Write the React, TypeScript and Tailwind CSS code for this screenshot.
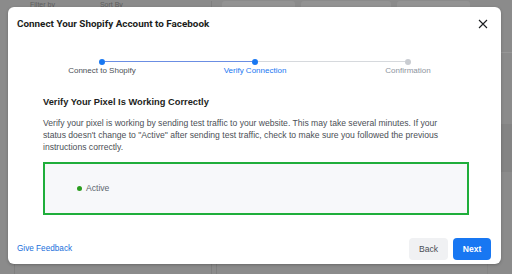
import React from 'react';

type StepState = 'done' | 'current' | 'todo';

const steps: { label: string; state: StepState }[] = [
  { label: 'Connect to Shopify', state: 'done' },
  { label: 'Verify Connection', state: 'current' },
  { label: 'Confirmation', state: 'todo' },
];

const BLUE_LINE = 'bg-[#6b8ee3]';
const GRAY_LINE = 'bg-[#d6d9dd]';

function Stepper() {
  return (
    <div className="flex justify-center pt-[27px] pl-[1px]">
      {steps.map((s, i) => {
        // half-lines either side of each dot
        const left = i === 0 ? 'bg-transparent' : i === 1 ? BLUE_LINE : GRAY_LINE;
        const right = i === 2 ? 'bg-transparent' : i === 0 ? BLUE_LINE : GRAY_LINE;
        return (
          <div key={s.label} className="flex w-[153px] flex-col items-center">
            <div className="flex h-[7px] w-full items-center">
              <div className={`h-px flex-1 ${left}`} />
              <div
                className={
                  s.state === 'todo'
                    ? 'h-[6px] w-[6px] rounded-full bg-[#c9ccd1]'
                    : 'h-[6px] w-[6px] rounded-full bg-[#1877f2]'
                }
              />
              <div className={`h-px flex-1 ${right}`} />
            </div>
            <div
              className={
                s.state === 'current'
                  ? 'mt-[1px] text-[8px] leading-[10px] text-[#1877f2]'
                  : s.state === 'done'
                  ? 'mt-[1px] text-[8px] leading-[10px] text-[#4b4f56]'
                  : 'mt-[1px] text-[8px] leading-[10px] text-[#8d949e]'
              }
            >
              {s.label}
            </div>
          </div>
        );
      })}
    </div>
  );
}

export default function App() {
  return (
    <div className="relative h-[274px] w-[512px] overflow-hidden bg-[#8b8b8b] font-['Liberation_Sans',Arial,sans-serif]">
      {/* dimmed page behind the dialog */}
      <div className="flex h-full flex-col">
        <div className="flex h-[9px] items-end pl-[22px]">
          <div className="flex h-[8px] w-[190px] items-start gap-[45px] border-r border-[#7f7f7f] pl-[8px]">
            <span className="text-[7px] leading-[7px] text-[#5e5e5e]">Filter by</span>
            <span className="text-[7px] leading-[7px] text-[#5e5e5e]">Sort By</span>
          </div>
          <div className="ml-[10px] flex gap-[6px]">
            <div className="h-[8px] w-[73px] rounded-t-[3px] bg-[#939393]" />
            <div className="h-[8px] w-[90px] rounded-t-[3px] bg-[#939393]" />
            <div className="h-[8px] w-[73px] rounded-t-[3px] bg-[#939393]" />
          </div>
        </div>
        <div className="flex flex-1">
          <div className="ml-[14px] w-[198px] border-l border-r border-[#7f7f7f]" />
          <div className="ml-[4px] flex-1 border-l border-[#7f7f7f]" />
          <div className="flex w-[25px] flex-col border-l border-[#858585] pt-[43px]">
            <div className="h-px bg-[#979797]" />
            <span className="mt-[23px] text-[7px] leading-[8px] text-[#3a3a3a]">ew,</span>
            <div className="mt-[40px] flex h-[48px] items-end bg-[#848484] pb-[8px]">
              <span className="text-[7px] leading-[8px] text-[#3a3a3a]">ped</span>
            </div>
          </div>
        </div>
      </div>

      {/* dialog */}
      <div className="absolute left-[8px] top-[7px] flex h-[257px] w-[493px] flex-col rounded-[6px] bg-white shadow-[0_1px_3px_rgba(0,0,0,0.25)]">
        <div className="flex items-center justify-between pl-[9px] pr-[13px] pt-[9px]">
          <h2 className="font-['Roboto',Arial,sans-serif] text-[9.9px] font-bold leading-[15px] text-[#1c1e21]">
            Connect Your Shopify Account to Facebook
          </h2>
          <svg width="10" height="10" viewBox="0 0 10 10">
            <path d="M1 1L9 9M9 1L1 9" stroke="#1c1e21" strokeWidth="1.1" />
          </svg>
        </div>

        <Stepper />

        <div className="px-[35px] pt-[19px]">
          <h3 className="text-[9.3px] font-bold leading-[14px] text-[#1c1e21]">Verify Your Pixel Is Working Correctly</h3>
          <p className="mt-[8px] w-[405px] text-[8.6px] leading-[12px] text-[#4b4f56]">
            Verify your pixel is working by sending test traffic to your website. This may take several minutes. If your
            status doesn't change to "Active" after sending test traffic, check to make sure you followed the previous
            instructions correctly.
          </p>
          <div className="mt-[9px] flex h-[53px] w-[426px] items-center border-2 border-[#1fae3b] bg-[#f7f8fa] pl-[32px]">
            <span className="h-[5px] w-[5px] rounded-full bg-[#2a9d1f]" />
            <span className="ml-[4px] text-[8.6px] text-[#606770]">Active</span>
          </div>
        </div>

        <div className="mt-auto flex items-center justify-between pb-[4px] pl-[9px] pr-[10px]">
          <a className="text-[8.2px] text-[#216fdb]">Give Feedback</a>
          <div className="flex gap-[5px]">
            <button className="h-[22px] w-[39px] rounded-[4px] bg-[#f0f1f3] text-[8.6px] text-[#4b4f56]">Back</button>
            <button className="h-[22px] w-[38px] rounded-[4px] bg-[#1877f2] text-[8.6px] font-bold text-white">Next</button>
          </div>
        </div>
      </div>
    </div>
  );
}
